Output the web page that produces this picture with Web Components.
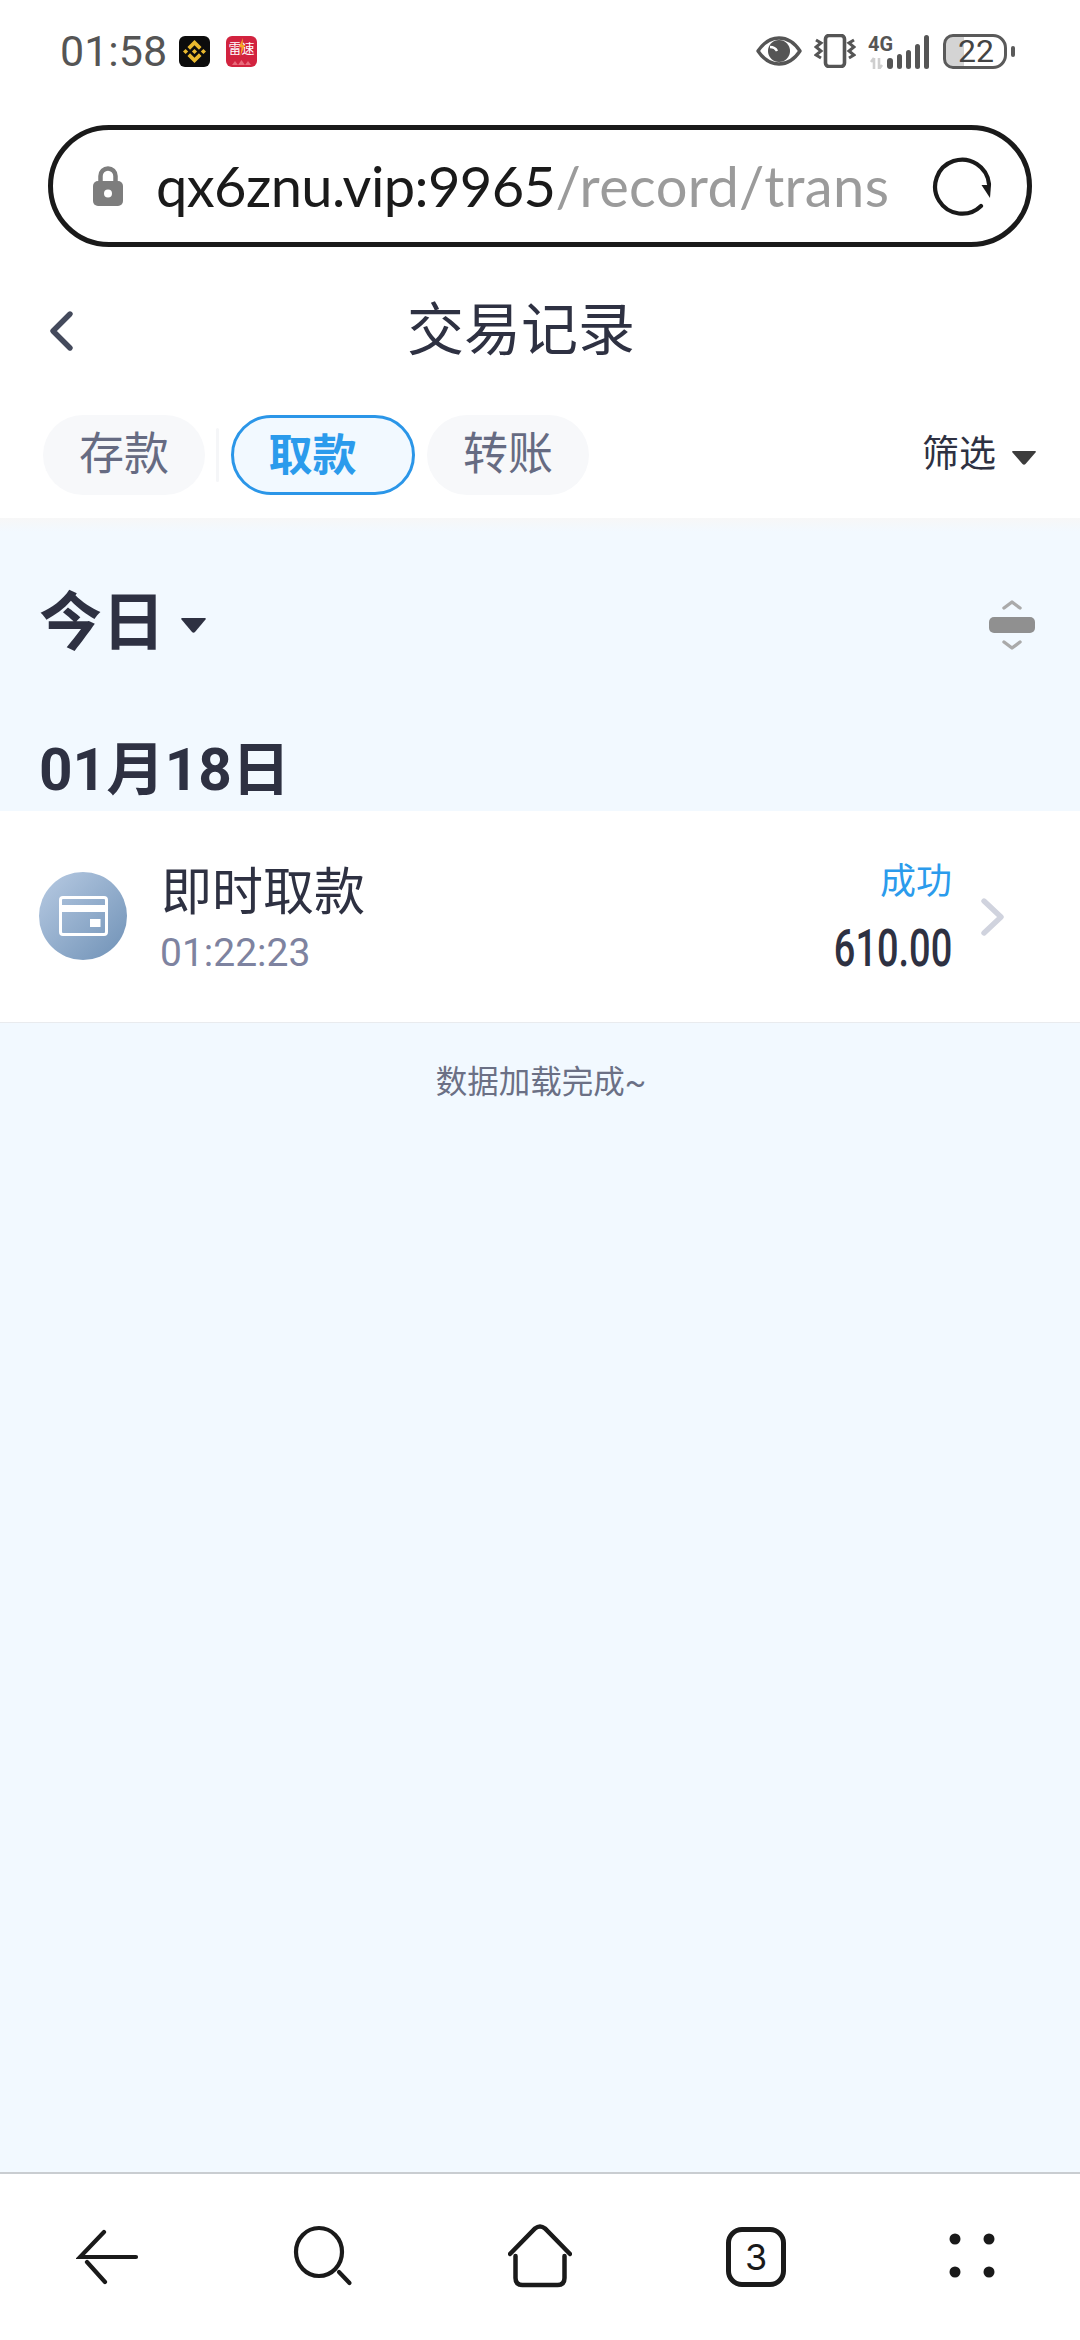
<!DOCTYPE html>
<html lang="zh">
<head>
<meta charset="utf-8">
<title>交易记录</title>
<style>
  html, body { margin: 0; padding: 0; }
  body {
    width: 1080px; height: 2340px; background: #fff; overflow: hidden;
    display: flex; flex-direction: column;
    font-family: Roboto, "Noto Sans CJK SC", sans-serif; color: #2e3142;
  }
  record-list { flex: 1; }
</style>
</head>
<body>
  <phone-status time="01:58" battery="22"></phone-status>
  <url-bar host="qx6znu.vip:9965" path="/record/trans"></url-bar>
  <page-header>交易记录</page-header>
  <record-tabs>
    <record-tab slot="first">存款</record-tab>
    <record-tab active>取款</record-tab>
    <record-tab>转账</record-tab>
    <span slot="filter">筛选</span>
  </record-tabs>
  <record-list>
    <record-row>
      <span slot="title">即时取款</span>
      <span slot="time">01:22:23</span>
      <span slot="status">成功</span>
      <span slot="amount">610.00</span>
    </record-row>
  </record-list>
  <bottom-nav tabs="3"></bottom-nav>

<script>
// 状态栏
class PhoneStatus extends HTMLElement {
  constructor() {
    super();
    this.attachShadow({ mode: 'open' });
  }

  connectedCallback() {
    this.shadowRoot.innerHTML = `
      <style>
        :host { display: flex; align-items: center; height: 100px; padding: 2px 65px 0 60px; box-sizing: border-box; color: #555; font-family: Roboto, "Noto Sans CJK SC", sans-serif; }
        .time { font-size: 43px; line-height: 48px; width: 119px; }
        .app { width: 31px; height: 31px; border-radius: 6px; display: flex; align-items: center; justify-content: center; }
        .bnb { background: #0c0c0c; }
        .red { background: #d2233f; margin-left: 16px; position: relative; color: #fff; font-size: 13px; line-height: 14px; font-family: "Noto Sans CJK SC", sans-serif; padding-bottom: 7px; box-sizing: border-box; }
        .red .bolt { position: absolute; left: 13px; top: 1px; }
        .red .hill { position: absolute; left: 6px; bottom: 2px; }
        .grow { flex: 1; }
        .icons { display: flex; align-items: center; }
        svg { display: block; }
        .battery { width: 64px; height: 35px; margin-left: 13px; box-sizing: border-box; border: 3px solid #5a5a5a; border-radius: 10px 14px 14px 10px; background: linear-gradient(90deg, #d4d4d4 18px, transparent 18px); display: flex; align-items: center; justify-content: center; font-size: 32px; line-height: 32px; color: #444; padding-left: 2px; }
        .nub { width: 4px; height: 11px; background: #5a5a5a; border-radius: 2px; margin-left: 4px; }
      </style>
      <span class="time">${this.getAttribute('time')}</span>
      <span class="app bnb">
        <svg width="23" height="23" viewBox="0 0 32 32" fill="#e9b92f"><path d="M9.8 13.4 16 7.2l6.2 6.2 3.6-3.6L16 0 6.2 9.8zM0 16l3.6-3.6L7.2 16l-3.6 3.6zM9.8 18.6 16 24.8l6.2-6.2 3.6 3.6L16 32l-9.8-9.8zM24.8 16l3.6-3.6L32 16l-3.6 3.6zM19.6 16 16 12.4 12.4 16l3.6 3.6z"/></svg>
      </span>
      <span class="app red">雷速<svg class="bolt" width="6" height="20" viewBox="0 0 6 18"><path d="M4 0 0 9h2.5L1.5 18 6 7H3.5z" fill="#f5a623"/></svg><svg class="hill" width="19" height="5" viewBox="0 0 19 5"><path d="M0 5l3-4 3 4zM6 5l3.500-5L13 5zM13 5l3-4 3 4z" fill="#e86a7a"/></svg></span>
      <span class="grow"></span>
      <span class="icons">
        <svg width="46" height="30" viewBox="0 0 46 30"><path d="M2 15C8 6 15 2 23 2s15 4 21 13c-6 9-13 13-21 13S8 24 2 15z" fill="none" stroke="#555" stroke-width="3.4" stroke-linejoin="round"/><circle cx="23" cy="15" r="11" fill="#555"/><path d="M14 11c2 0 5 0 7 4" stroke="#fff" stroke-width="2.4" fill="none"/></svg>
        <svg style="margin-left:12px" width="42" height="34" viewBox="0 0 42 34"><rect x="11.500" y="1.500" width="19" height="31" rx="3.500" fill="none" stroke="#555" stroke-width="3.600"/><path d="M2 6l5 3-5 4 5 4-5 4 5 3M40 6l-5 3 5 4-5 4 5 4-5 3" fill="none" stroke="#555" stroke-width="3"/></svg>
        <svg style="margin:-5px 0 0 12px" width="62" height="40" viewBox="0 -5 62 40">
          <text x="0" y="17" font-family="Roboto, sans-serif" font-size="20" font-weight="700" fill="#555" textLength="25" lengthAdjust="spacingAndGlyphs">4G</text>
          <path d="M6 24v11M6 24l-3 4M11 35V24M11 35l3-4" stroke="#cfcfcf" stroke-width="2.6" fill="none"/>
          <rect x="19" y="24" width="6" height="11" rx="3" fill="#555"/>
          <rect x="29" y="20" width="5" height="15" rx="2.5" fill="#555"/>
          <rect x="38" y="16" width="5" height="19" rx="2.5" fill="#555"/>
          <rect x="47" y="10" width="5" height="25" rx="2.5" fill="#555"/>
          <rect x="56" y="1" width="5" height="34" rx="2.5" fill="#555"/>
        </svg>
        <span class="battery">${this.getAttribute('battery')}</span>
        <span class="nub"></span>
      </span>
    `;
  }
}
customElements.define('phone-status', PhoneStatus);

// 地址栏
class UrlBar extends HTMLElement {
  constructor() {
    super();
    this.attachShadow({ mode: 'open' });
  }

  connectedCallback() {
    this.shadowRoot.innerHTML = `
      <style>
        :host { display: flex; align-items: center; height: 122px; margin: 25px 48px 0; padding: 0 35px 0 40px; box-sizing: border-box; border: 5px solid #1a1a1a; border-radius: 61px; }
        svg { display: block; flex: none; }
        .text { flex: 1; min-width: 0; margin: 0 40px 0 33px; white-space: nowrap; font-family: Lato, sans-serif; font-size: 56px; line-height: 70px; letter-spacing: -.6px; color: #1a1a1a; }
        .path { color: #9b9b9b; letter-spacing: .35px; }
      </style>
      <svg width="30" height="40" viewBox="0 0 30 40"><path d="M7.5 18v-8a7.5 7.5 0 0 1 15 0v8" fill="none" stroke="#7d7d7d" stroke-width="4.5"/><rect x="0" y="15" width="30" height="25" rx="5" fill="#7d7d7d"/><circle cx="15" cy="27.5" r="4" fill="#fff"/></svg>
      <span class="text">${this.getAttribute('host')}<span class="path">${this.getAttribute('path')}</span></span>
      <svg width="60" height="60" viewBox="0 0 60 60"><path d="M49 50A27 27 0 1 1 57 28" fill="none" stroke="#1a1a1a" stroke-width="4.2" stroke-linecap="round"/><path d="M49.5 29h9.5l-1 13z" fill="#1a1a1a"/></svg>
    `;
  }
}
customElements.define('url-bar', UrlBar);

// 页头
class PageHeader extends HTMLElement {
  constructor() {
    super();
    this.attachShadow({ mode: 'open' });
    this.shadowRoot.innerHTML = `
      <style>
        :host { display: flex; align-items: center; height: 168px; padding-left: 49px; padding-bottom: 4px; box-sizing: border-box; font-family: "Noto Sans CJK SC", sans-serif; color: #2e3142; }
        svg { display: block; flex: none; margin-top: 3px; }
        .title { flex: 1; text-align: center; font-size: 57px; line-height: 70px; margin-right: 112px; margin-bottom: 9px; }
      </style>
      <svg width="25" height="42" viewBox="0 0 25 42"><path d="M21 4 4 21l17 17" fill="none" stroke="#444a5c" stroke-width="5.4" stroke-linecap="round" stroke-linejoin="round"/></svg>
      <span class="title"><slot></slot></span>
    `;
  }
}
customElements.define('page-header', PageHeader);

// 分类标签
class RecordTab extends HTMLElement {
  constructor() {
    super();
    this.attachShadow({ mode: 'open' });
    this.shadowRoot.innerHTML = `
      <style>
        :host { display: flex; align-items: center; justify-content: center; width: 162px; height: 80px; box-sizing: border-box; border-radius: 40px; background: #f7f8fa; color: #666b82; font-size: 45px; line-height: 60px; padding-bottom: 8px; }
        :host([active]) { width: 184px; border: 3px solid #2b96e8; background: #f2f9ff; color: #2b9bec; font-size: 44px; font-weight: 700; padding-right: 21px; padding-bottom: 6px; }
      </style>
      <slot></slot>
    `;
  }
}
customElements.define('record-tab', RecordTab);

class RecordTabs extends HTMLElement {
  constructor() {
    super();
    this.attachShadow({ mode: 'open' });
    this.shadowRoot.innerHTML = `
      <style>
        :host { display: flex; align-items: flex-start; height: 103px; padding: 0 43px; box-sizing: border-box; font-family: "Noto Sans CJK SC", sans-serif; }
        .tabs { display: flex; align-items: center; gap: 12px; }
        .sep { width: 3px; height: 54px; margin: 0 0 0 -1px; border-radius: 2px; background: #f5f6f8; }
        .filter { margin-left: auto; display: flex; align-items: center; height: 80px; color: #2e3142; font-size: 37px; }
        .label { padding-bottom: 8px; }
        svg { display: block; margin-left: 15px; margin-top: 6px; }
      </style>
      <div class="tabs"><slot name="first"></slot><span class="sep"></span><slot></slot></div>
      <div class="filter"><span class="label"><slot name="filter"></slot></span>
        <svg width="26" height="16" viewBox="0 0 26 16"><path d="M2 1h22q1.500 0 .5 1.500L14.500 14q-1.500 1.500-3 0L1.500 2.500Q.5 1 2 1z" fill="#3c3c3c"/></svg>
      </div>
    `;
  }
}
customElements.define('record-tabs', RecordTabs);

// 记录列表
class RecordList extends HTMLElement {
  constructor() {
    super();
    this.attachShadow({ mode: 'open' });
    this.shadowRoot.innerHTML = `
      <style>
        :host { display: block; background: linear-gradient(#f7f7f7, #f2f9ff 14px); font-family: Roboto, "Noto Sans CJK SC", sans-serif; color: #2e3142; }
        .range { display: flex; align-items: center; height: 207px; padding: 0 45px 0 39px; }
        .today { font-size: 63px; line-height: 70px; font-weight: 700; margin-top: 3px; }
        .caret { margin-left: 15px; margin-top: 8px; }
        .sort { margin-left: auto; margin-top: 6px; }
        svg { display: block; }
        .date { height: 86px; padding-left: 39px; font-size: 58.5px; line-height: 90px; font-weight: 700; }
        .tip { margin-top: 40px; text-align: center; font-size: 31.500px; line-height: 40px; color: #6b7085; padding-left: 2px; }
      </style>
      <div class="range">
        <span class="today">今日</span>
        <svg class="caret" width="27" height="17" viewBox="0 0 27 17"><path d="M2 1h23q1.500 0 .5 1.500L15 15q-1.500 1.500-3 0L1.500 2.500Q.5 1 2 1z" fill="#2e3142"/></svg>
        <svg class="sort" width="46" height="50" viewBox="0 0 46 50"><path d="M15 8l8-6 8 6M15 42l8 6 8-6" fill="none" stroke="#aaa" stroke-width="3.4" stroke-linecap="round" stroke-linejoin="round"/><rect x="0" y="17" width="46" height="16" rx="5" fill="#909090"/></svg>
      </div>
      <div class="date">01月18日</div>
      <slot></slot>
      <div class="tip">数据加载完成~</div>
    `;
  }
}
customElements.define('record-list', RecordList);

class RecordRow extends HTMLElement {
  constructor() {
    super();
    this.attachShadow({ mode: 'open' });
    this.shadowRoot.innerHTML = `
      <style>
        :host { display: flex; align-items: center; height: 212px; padding: 0 75px 0 39px; box-sizing: border-box; background: #fff; border-bottom: 1px solid #e9ebee; }
        .icon { width: 88px; height: 88px; border-radius: 50%; background: linear-gradient(135deg, #b8cbe3, #6f91b6); display: flex; align-items: center; justify-content: center; flex: none; margin-top: -2px; }
        svg { display: block; }
        .main { margin-left: 34px; display: flex; flex-direction: column; }
        .title { font-size: 51px; line-height: 60px; color: #2e3142; font-family: "Noto Sans CJK SC", sans-serif; }
        .time { font-size: 39px; line-height: 46px; margin-top: 12px; color: #7e83a0; margin-left: -1px; }
        .side { margin-left: auto; display: flex; flex-direction: column; align-items: flex-end; margin-top: -1px; }
        .status { font-size: 36px; line-height: 44px; margin-top: -6px; color: #2b9bec; font-family: "Noto Sans CJK SC", sans-serif; }
        .amount { display: block; font-size: 52px; line-height: 58px; margin-top: 20px; margin-bottom: -8px; font-weight: 500; color: #2e3142; transform: scaleX(.73); transform-origin: right center; }
        .arrow { margin-left: 29px; }
      </style>
      <span class="icon">
        <svg width="49" height="40" viewBox="0 0 49 40"><rect x="1.500" y="1.500" width="46" height="37" rx="2.500" fill="none" stroke="#fff" stroke-width="3"/><path d="M2 12.500h45" stroke="#fff" stroke-width="7"/><rect x="31" y="23" width="10.500" height="8" fill="#fff"/></svg>
      </span>
      <div class="main"><span class="title"><slot name="title"></slot></span><span class="time"><slot name="time"></slot></span></div>
      <div class="side"><span class="status"><slot name="status"></slot></span><span class="amount"><slot name="amount"></slot></span></div>
      <svg class="arrow" width="24" height="38" viewBox="0 0 24 38"><path d="M3 3l17 16L3 35" fill="none" stroke="#d0d3de" stroke-width="5.400" stroke-linecap="round" stroke-linejoin="round"/></svg>
    `;
  }
}
customElements.define('record-row', RecordRow);

// 底部工具栏
class BottomNav extends HTMLElement {
  constructor() {
    super();
    this.attachShadow({ mode: 'open' });
  }

  connectedCallback() {
    this.shadowRoot.innerHTML = `
      <style>
        :host { display: grid; grid-template-columns: repeat(5, 1fr); height: 168px; padding-top: 50px; box-sizing: border-box; border-top: 2px solid #c9cdd1; background: #fff; }
        .cell { display: flex; justify-content: center; align-items: flex-start; }
        svg { display: block; }
        .count { width: 60px; height: 60px; margin-top: 3px; box-sizing: border-box; border: 5px solid #1a1a1a; border-radius: 16px; display: flex; align-items: center; justify-content: center; font-family: Inter, Roboto, sans-serif; font-size: 36px; color: #1a1a1a; }
      </style>
      <div class="cell"><svg width="64" height="64" viewBox="0 0 64 64" fill="none" stroke="#1a1a1a" stroke-width="4.200" stroke-linecap="round"><path d="M60 33H4L28 8M11 38l18 20"/></svg></div>
      <div class="cell"><svg width="64" height="64" viewBox="0 0 64 64" fill="none" stroke="#1a1a1a" stroke-width="4.200" stroke-linecap="round"><ellipse cx="27" cy="28" rx="23" ry="24"/><path d="M47 48l10.500 11"/></svg></div>
      <div class="cell"><svg width="64" height="64" viewBox="0 0 64 64" fill="none" stroke="#1a1a1a" stroke-width="4.500" stroke-linecap="round"><path d="M2 30 27 4.500q5-4 10 0L62 30"/><path d="M7.500 32V54q0 7 7 7h35q7 0 7-7V32"/></svg></div>
      <div class="cell"><span class="count">${this.getAttribute('tabs')}</span></div>
      <div class="cell"><svg width="64" height="64" viewBox="0 0 64 64" fill="#1a1a1a"><circle cx="15" cy="15" r="5.500"/><circle cx="49" cy="15" r="5.500"/><circle cx="15" cy="48" r="5.500"/><circle cx="49" cy="48" r="5.500"/></svg></div>
    `;
  }
}
customElements.define('bottom-nav', BottomNav);
</script>
</body>
</html>
